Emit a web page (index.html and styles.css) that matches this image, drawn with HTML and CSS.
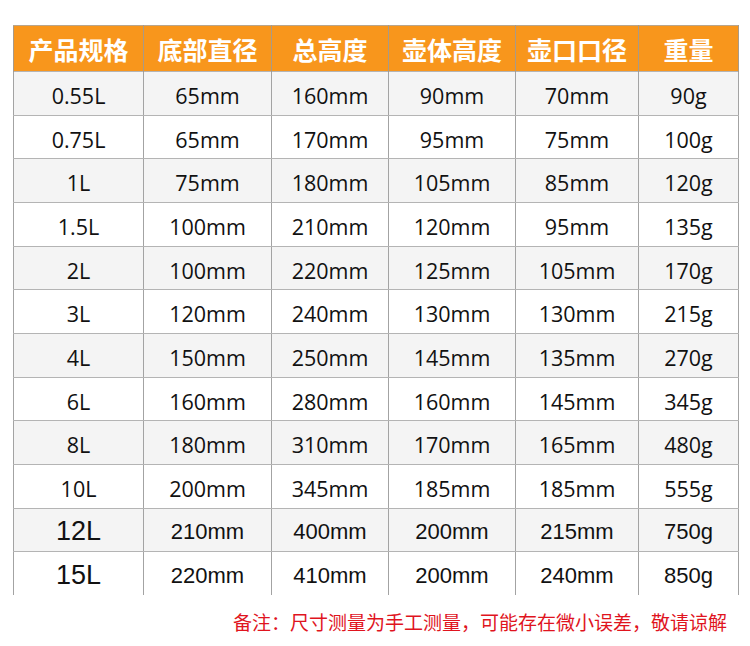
FILE: index.html
```html
<!DOCTYPE html>
<html lang="zh-CN">
<head>
<meta charset="utf-8">
<title>产品规格</title>
<link rel="stylesheet" href="styles.css">
</head>
<body>
<div class="page">
  <table class="spec">
    <colgroup>
      <col class="c1"><col class="c2"><col class="c3"><col class="c4"><col class="c5"><col class="c6">
    </colgroup>
    <thead>
      <tr><th>产品规格</th><th>底部直径</th><th>总高度</th><th>壶体高度</th><th>壶口口径</th><th>重量</th></tr>
    </thead>
    <tbody>
      <tr><td>0.55L</td><td>65mm</td><td>160mm</td><td>90mm</td><td>70mm</td><td>90g</td></tr>
      <tr><td>0.75L</td><td>65mm</td><td>170mm</td><td>95mm</td><td>75mm</td><td>100g</td></tr>
      <tr><td>1L</td><td>75mm</td><td>180mm</td><td>105mm</td><td>85mm</td><td>120g</td></tr>
      <tr><td>1.5L</td><td>100mm</td><td>210mm</td><td>120mm</td><td>95mm</td><td>135g</td></tr>
      <tr><td>2L</td><td>100mm</td><td>220mm</td><td>125mm</td><td>105mm</td><td>170g</td></tr>
      <tr><td>3L</td><td>120mm</td><td>240mm</td><td>130mm</td><td>130mm</td><td>215g</td></tr>
      <tr><td>4L</td><td>150mm</td><td>250mm</td><td>145mm</td><td>135mm</td><td>270g</td></tr>
      <tr><td>6L</td><td>160mm</td><td>280mm</td><td>160mm</td><td>145mm</td><td>345g</td></tr>
      <tr><td>8L</td><td>180mm</td><td>310mm</td><td>170mm</td><td>165mm</td><td>480g</td></tr>
      <tr><td>10L</td><td>200mm</td><td>345mm</td><td>185mm</td><td>185mm</td><td>555g</td></tr>
      <tr class="alt-font"><td class="big">12L</td><td>210mm</td><td>400mm</td><td>200mm</td><td>215mm</td><td>750g</td></tr>
      <tr class="alt-font last"><td class="big">15L</td><td>220mm</td><td>410mm</td><td>200mm</td><td>240mm</td><td>850g</td></tr>
    </tbody>
  </table>
  <p class="note">备注：尺寸测量为手工测量，可能存在微小误差，敬请谅解</p>
</div>
</body>
</html>
```

FILE: styles.css
```css
html, body {
  margin: 0;
  padding: 0;
  background: #ffffff;
}

.page {
  width: 750px;
  height: 646px;
  padding: 25px 0 0 13px;
  box-sizing: border-box;
}

.spec {
  border-collapse: collapse;
  table-layout: fixed;
  width: 725px;
  font-family: "Open Sans", "Noto Sans CJK SC", sans-serif;
  color: #111111;
}

.c1 { width: 130px; }
.c2 { width: 128px; }
.c3 { width: 117px; }
.c4 { width: 127px; }
.c5 { width: 123px; }
.c6 { width: 100px; }

.spec th {
  height: 46px;
  padding: 2px 0 0;
  box-sizing: border-box;
  background: #f8961c;
  color: #ffffff;
  font-family: "Noto Sans CJK SC", sans-serif;
  font-weight: 700;
  font-size: 25px;
  line-height: 1;
  text-align: center;
  border-left: 1px solid #a89a88;
  border-right: 1px solid #a89a88;
  border-top: 1px solid #b8a58c;
}

.spec td {
  height: 43.67px;
  padding: 5px 0 0;
  box-sizing: border-box;
  font-size: 21.5px;
  line-height: 1;
  text-align: center;
  border: 1px solid #a3a3a3;
  border-top-color: #b4b4b4;
  border-bottom-color: #b4b4b4;
}

.spec tbody tr:nth-child(odd) td {
  background: #f4f4f4;
}

.spec tbody tr:nth-child(even) td {
  background: #ffffff;
}

.alt-font td {
  font-family: "Liberation Sans", "Noto Sans CJK SC", sans-serif;
  font-size: 22px;
}

.alt-font td.big {
  font-size: 27px;
  padding-top: 4px;
}

.last td {
  border-bottom: none;
}

.note {
  margin: 16px 0 0;
  padding-right: 23px;
  text-align: right;
  color: #e0141e;
  font-family: "Noto Sans CJK SC", sans-serif;
  font-size: 19px;
  line-height: 1.2;
}
```
